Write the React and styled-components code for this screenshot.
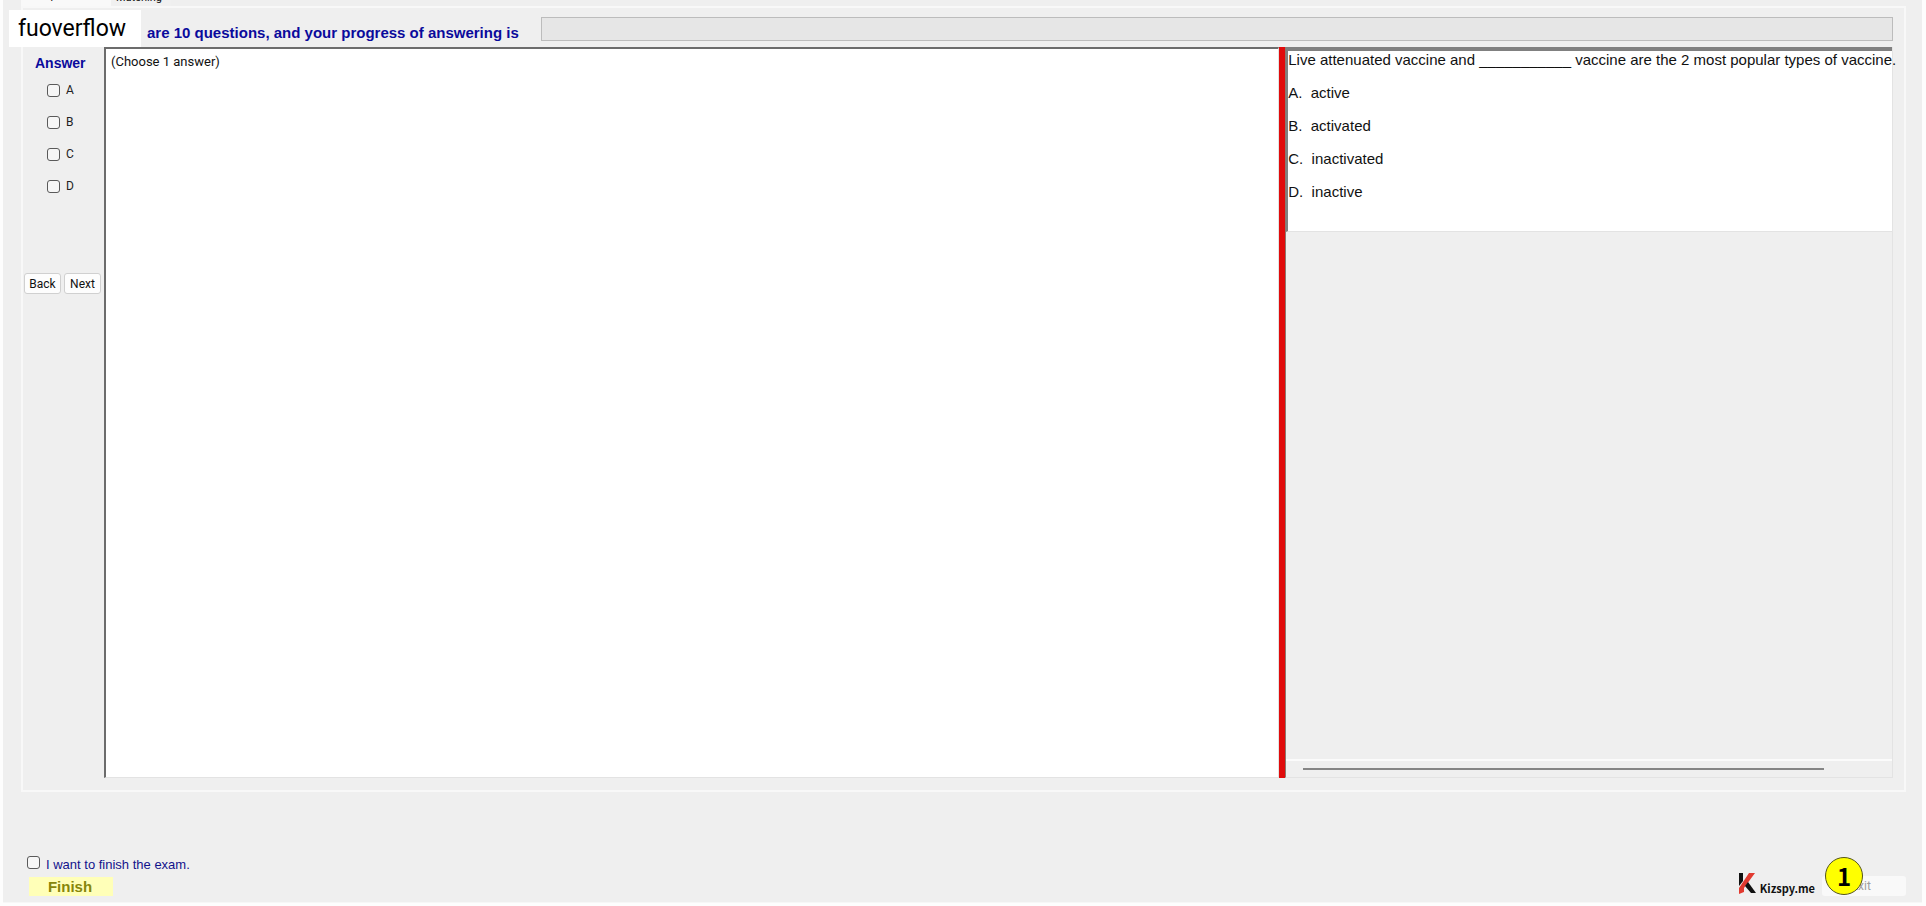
import React, { useState } from "react";
import styled, { createGlobalStyle } from "styled-components";

const answers = ["A", "B", "C", "D"];

const options = [
  { letter: "A", text: "active" },
  { letter: "B", text: "activated" },
  { letter: "C", text: "inactivated" },
  { letter: "D", text: "inactive" },
];

const App = () => {
  const [picked, setPicked] = useState("");
  const [finish, setFinish] = useState(false);

  return (
    <Window>
      <GlobalStyle />
      <Tabs>
        <Tab $active>Multiple</Tab>
        <Tab>Matching</Tab>
      </Tabs>
      <TabPage>
        <Watermark>fuoverflow</Watermark>
        <Heading>
          <h1>are 10 questions, and your progress of answering is</h1>
          <Progress value="0" max="10" aria-label="Progress" />
        </Heading>
        <Exam>
          <AnswerColumn>
            <h2>Answer</h2>
            <div className="choices">
              {answers.map((letter) => (
                <CheckLabel key={letter}>
                  <CheckBox
                    type="checkbox"
                    checked={picked === letter}
                    onChange={() => setPicked(picked === letter ? "" : letter)}
                  />
                  {letter}
                </CheckLabel>
              ))}
            </div>
            <div className="nav">
              <NavButton type="button">Back</NavButton>
              <NavButton type="button">Next</NavButton>
            </div>
          </AnswerColumn>
          <Sheet>(Choose 1 answer)</Sheet>
          <Splitter />
          <Question>
            <div className="content">
              <p>
                Live attenuated vaccine and ___________ vaccine are the 2 most
                popular types of vaccine.
              </p>
              {options.map((option) => (
                <p key={option.letter}>
                  {option.letter}.&nbsp; {option.text}
                </p>
              ))}
            </div>
            <div className="scroll">
              <div className="thumb" />
            </div>
          </Question>
        </Exam>
      </TabPage>
      <Footer>
        <div>
          <FinishLabel>
            <CheckBox
              type="checkbox"
              checked={finish}
              onChange={() => setFinish(!finish)}
            />
            I want to finish the exam.
          </FinishLabel>
          <FinishButton type="button">Finish</FinishButton>
        </div>
        <div className="right">
          <Brand>
            <svg width="17" height="21" viewBox="0 0 17 21">
              <path d="M0 0h4v8L0 13z" fill="#111" />
              <path d="M10 0h6L5 15v4l-5 2v-6z" fill="#e23a30" />
              <path d="M6 13l3-4 8 11h-5z" fill="#111" />
            </svg>
            <span>Kizspy.me</span>
          </Brand>
          <ExitWrap>
            <ExitButton type="button" disabled>
              Exit
            </ExitButton>
            <Badge>1</Badge>
          </ExitWrap>
        </div>
      </Footer>
    </Window>
  );
};

const GlobalStyle = createGlobalStyle`
  * {
    box-sizing: border-box;
  }
  body {
    margin: 0;
    background: #fdfdfd;
    font-family: Roboto, "Liberation Sans", sans-serif;
    font-size: 12px;
    color: #111;
  }
  h1, h2, p {
    margin: 0;
  }
`;

const Window = styled.div`
  display: flex;
  flex-direction: column;
  min-height: calc(100vh - 3px);
  margin: 0 4px 3px 3px;
  padding: 0 16px 6px 18px;
  background: #efefef;
  border-bottom: 1px solid #f7f7f7;
`;

const Tabs = styled.div`
  display: flex;
  align-items: flex-end;
  height: 6px;
  overflow: hidden;
`;

const Tab = styled.div`
  width: ${(props) => (props.$active ? "90px" : "60px")};
  padding: ${(props) => (props.$active ? "0 0 2px 5px" : "0 0 0 5px")};
  font-size: 11px;
  line-height: 16px;
  background: ${(props) => (props.$active ? "#f9f9f9" : "#f0f0f0")};
`;

const TabPage = styled.main`
  position: relative;
  display: flex;
  flex: 1;
  flex-direction: column;
  padding: 9px 11px 12px 0;
  border: 2px solid #f8f8f8;
`;

const Watermark = styled.div`
  position: absolute;
  top: 2px;
  left: -14px;
  padding: 0 15px 0 9px;
  background: #fff;
  color: #000;
  font-size: 23px;
  line-height: 37px;
`;

const Heading = styled.header`
  display: flex;
  gap: 16px;
  padding: 0 0 6px 124px;
  h1 {
    min-width: 378px;
    height: 24px;
    color: #0a0a9c;
    font-family: "Liberation Sans", sans-serif;
    font-size: 15px;
    line-height: 31px;
    white-space: nowrap;
  }
`;

const Progress = styled.progress`
  appearance: none;
  flex: 1;
  min-width: 0;
  height: 24px;
  border: 1px solid #bcbcbc;
  background: #e6e6e6;
  &::-webkit-progress-bar {
    background: #e6e6e6;
  }
`;

const Exam = styled.div`
  display: flex;
  flex: 1;
  min-height: 0;
`;

const AnswerColumn = styled.aside`
  width: 81px;
  h2 {
    padding: 7px 0 0 12px;
    color: #0a0a9c;
    font-family: "Liberation Sans", sans-serif;
    font-size: 14px;
    line-height: 18px;
  }
  .choices {
    display: grid;
    gap: 16px;
    padding: 10px 0 0 24px;
  }
  .nav {
    display: flex;
    gap: 3px;
    padding: 79px 0 0 1px;
  }
`;

const CheckLabel = styled.label`
  display: flex;
  align-items: center;
  gap: 6px;
  color: #222;
  line-height: 16px;
`;

const FinishLabel = styled.label`
  display: flex;
  gap: 6px;
  color: #12128c;
  font-family: "Liberation Sans", sans-serif;
  font-size: 13px;
  line-height: 18px;
`;

const CheckBox = styled.input`
  appearance: none;
  width: 13px;
  height: 13px;
  margin: 0;
  border: 1px solid #5a5a5a;
  border-radius: 3px;
  background: #f6f6f6;
  &:checked {
    background: #0a5fb4;
  }
`;

const NavButton = styled.button`
  width: 37px;
  height: 21px;
  padding: 0;
  border: 1px solid #d0d0d0;
  border-radius: 3px;
  background: #fdfdfd;
  color: #111;
  font-family: inherit;
  font-size: 12px;
`;

const Sheet = styled.section`
  flex: 1;
  min-width: 0;
  padding: 5px 5px;
  border: 1px solid #e3e3e3;
  border-top: 2px solid #6c6c6c;
  border-left: 2px solid #6c6c6c;
  background: #fff;
  font-size: 13px;
  line-height: 16px;
`;

const Splitter = styled.div`
  width: 6px;
  background: #e00b0b;
`;

const Question = styled.section`
  display: flex;
  flex-direction: column;
  width: 32.5%;
  min-width: 0;
  border: 1px solid #e3e3e3;
  border-left: 1px solid #8c7a70;
  border-top: 0;
  .content {
    min-height: 185px;
    border-top: 4px solid #808080;
    border-left: 2px solid #808080;
    border-bottom: 1px solid #e3e3e3;
    background: #fff;
    font-family: "Liberation Sans", sans-serif;
    font-size: 15px;
    line-height: 17px;
    white-space: nowrap;
  }
  p + p {
    margin-top: 16px;
  }
  .scroll {
    margin-top: auto;
    padding: 7px 68px 7px 17px;
    border-top: 2px solid #fbfbfb;
  }
  .thumb {
    height: 2px;
    background: #858585;
  }
`;

const Footer = styled.footer`
  display: flex;
  justify-content: space-between;
  align-items: flex-end;
  padding: 64px 0 0 6px;
  .right {
    display: flex;
    align-items: flex-end;
    gap: 7px;
  }
`;

const FinishButton = styled.button`
  display: block;
  width: 84px;
  height: 19px;
  margin: 3px 0 0 2px;
  padding: 0 2px 0 0;
  border: 0;
  background: #ffffb8;
  color: #86860a;
  font-family: "Liberation Sans", sans-serif;
  font-size: 15px;
  font-weight: bold;
`;

const Brand = styled.div`
  display: flex;
  align-items: flex-end;
  gap: 4px;
  padding-bottom: 2px;
  color: #111;
  font-family: "Noto Sans CJK SC", "Open Sans", sans-serif;
  font-size: 11px;
  font-weight: bold;
  line-height: 12px;
`;

const ExitWrap = styled.div`
  position: relative;
`;

const ExitButton = styled.button`
  display: block;
  width: 84px;
  height: 20px;
  padding: 0 6px 0 0;
  border: 0;
  border-radius: 3px;
  background: #f9f9f9;
  color: #a0a0a0;
  font-family: inherit;
  font-size: 12px;
`;

const Badge = styled.span`
  position: absolute;
  left: 3px;
  bottom: 1px;
  width: 38px;
  height: 38px;
  border: 1px solid #55551a;
  border-radius: 50%;
  background: #ffff00;
  color: #000;
  font-family: "Noto Sans CJK SC", sans-serif;
  font-size: 24px;
  font-weight: bold;
  line-height: 36px;
  text-align: center;
`;

export default App;
